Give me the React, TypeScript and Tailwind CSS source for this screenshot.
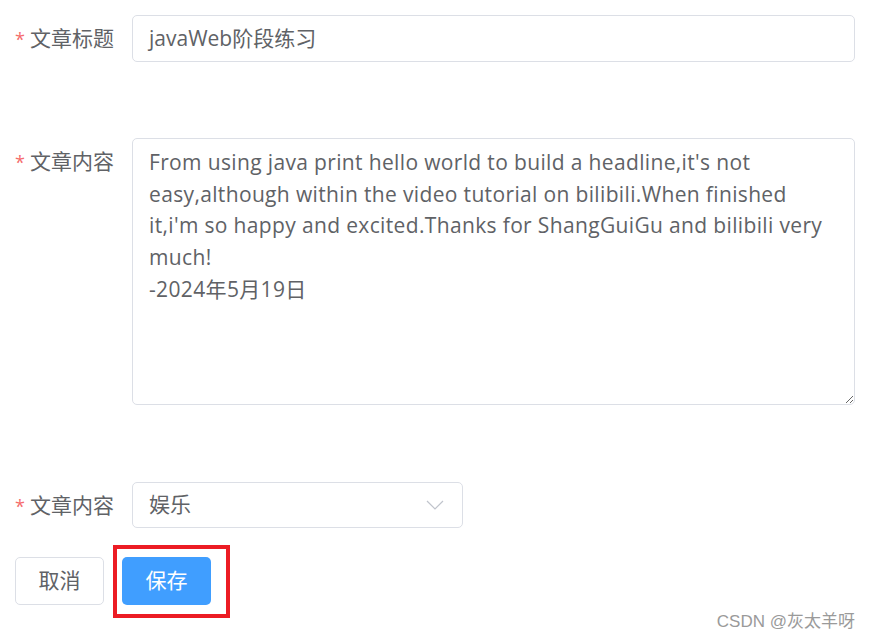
import React from "react";

const font = { fontFamily: '"Open Sans", "Noto Sans CJK SC", sans-serif' };

function Label({ text }: { text: string }) {
  return (
    <div className="w-[132px] shrink-0 flex items-center pl-[15px] text-[21px] text-[#606266] h-[47px]">
      <span className="text-[#f56c6c] mr-[5px] text-[18px] leading-none">*</span>
      <span className="leading-none">{text}</span>
    </div>
  );
}

export default function App() {
  const content =
    "From using java print hello world to build a headline,it's not easy,although within the video tutorial on bilibili.When finished it,i'm so happy and excited.Thanks for ShangGuiGu and bilibili very much!\n-2024年5月19日";
  return (
    <div className="w-[870px] h-[639px] bg-white relative overflow-hidden" style={font}>
      <div className="flex flex-col pt-[15px]">
        <div className="flex items-start">
          <Label text="文章标题" />
          <div className="w-[723px] h-[47px] border border-[#dcdfe6] rounded-[5px] flex items-center pl-[16px] text-[21px] text-[#606266] pt-[1px]">
            javaWeb阶段练习
          </div>
        </div>
        <div className="flex items-start mt-[76px]">
          <Label text="文章内容" />
          <textarea
            readOnly
            defaultValue={content}
            className="w-[723px] h-[267px] border border-[#dcdfe6] rounded-[5px] pl-[16px] pr-[16px] pt-[8px] text-[21px] leading-[31.7px] tracking-[0.35px] text-[#606266] outline-none resize-y"
            style={font}
          />
        </div>
        <div className="flex items-start mt-[77px]">
          <Label text="文章内容" />
          <div className="w-[331px] h-[46px] border border-[#dcdfe6] rounded-[5px] flex items-center justify-between pl-[16px] pr-[18px] text-[21px] text-[#606266]">
            <span>娱乐</span>
            <svg width="18" height="10" viewBox="0 0 18 10" fill="none">
              <path d="M1 1l8 8 8-8" stroke="#c0c4cc" strokeWidth="1.2" />
            </svg>
          </div>
        </div>
        <div className="flex items-center mt-[28px] pl-[15px] gap-[18px]">
          <div className="w-[89px] h-[48px] border border-[#dcdfe6] rounded-[5px] flex items-center justify-center text-[21px] text-[#606266]">
            取消
          </div>
          <div className="w-[89px] h-[48px] rounded-[5px] bg-[#409eff] flex items-center justify-center text-[21px] text-white">
            保存
          </div>
        </div>
      </div>
      <div className="absolute left-[113px] top-[545px] w-[117px] h-[73px] border-[4px] border-[#ec1c24]" />
      <div
        className="absolute right-[15px] top-[609px] text-[17px] text-[#9a9a9a]"
        style={{ fontFamily: '"Liberation Sans", "Noto Sans CJK SC", sans-serif' }}
      >
        CSDN @灰太羊呀
      </div>
    </div>
  );
}
